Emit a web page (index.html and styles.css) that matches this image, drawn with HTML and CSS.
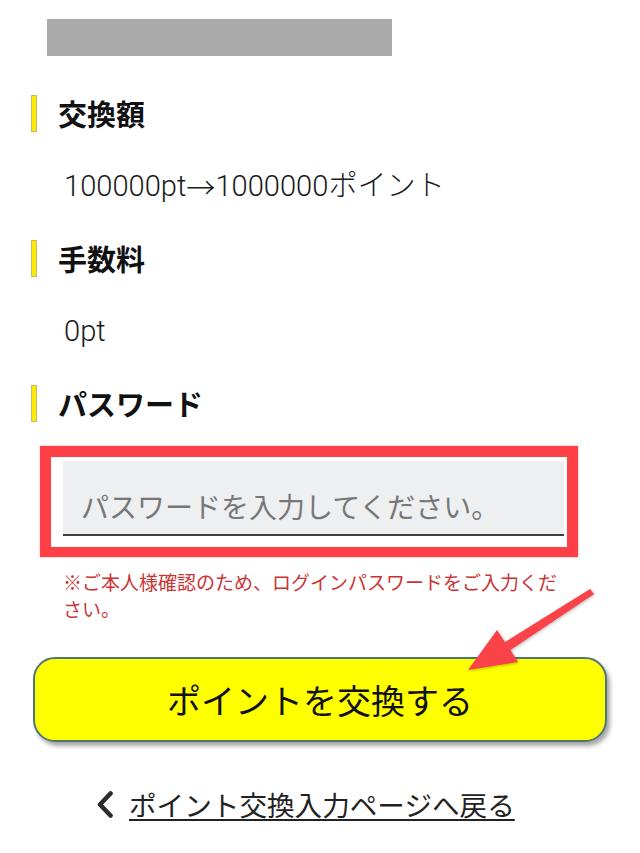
FILE: index.html
```html
<!DOCTYPE html>
<html lang="ja">
<head>
<meta charset="utf-8">
<title>ポイント交換確認</title>
<link rel="stylesheet" href="styles.css">
</head>
<body>
<div class="page">
  <div class="masked"></div>

  <section class="item">
    <h2 class="item-title"><span class="mark"></span>交換額</h2>
    <p class="item-value">100000pt<span class="arrow">→</span>1000000ポイント</p>
  </section>

  <section class="item">
    <h2 class="item-title"><span class="mark"></span>手数料</h2>
    <p class="item-value">0pt</p>
  </section>

  <section class="item">
    <h2 class="item-title"><span class="mark"></span>パスワード</h2>
  </section>

  <div class="password-field">
    <input class="password-input" type="password" placeholder="パスワードを入力してください。">
  </div>
  <p class="note">※ご本人様確認のため、ログインパスワードをご入力ください。</p>

  <button class="submit" type="button">ポイントを交換する</button>

  <a class="back" href="#">
    <svg class="chevron" width="16" height="27" viewBox="0 0 16 27" aria-hidden="true">
      <polyline points="13.5,2.5 3,13.5 13.5,24.5" fill="none" stroke="#2b2b2b" stroke-width="4.6" stroke-linecap="round" stroke-linejoin="round"/>
    </svg>
    <span class="back-text">ポイント交換入力ページへ戻る</span>
  </a>

  <svg class="annotation-arrow" width="640" height="853" viewBox="0 0 640 853" aria-hidden="true">
    <polygon points="594,594 510.5,650 518,662 468,670 497,630 505,642 590,589" fill="#fa4348"/>
  </svg>
</div>
</body>
</html>
```

FILE: styles.css
```css
html, body {
  margin: 0;
  padding: 0;
  background: #ffffff;
}

.page {
  position: relative;
  width: 640px;
  min-height: 853px;
  font-family: Roboto, "Noto Sans CJK JP", sans-serif;
  color: #111111;
  padding-top: 19px;
  box-sizing: border-box;
  overflow: hidden;
}

.masked {
  margin-left: 47px;
  width: 345px;
  height: 37px;
  background: #aaaaaa;
}

.item-title {
  display: flex;
  align-items: center;
  margin: 39px 0 0 31px;
  height: 37px;
  font-family: "Noto Sans CJK JP", sans-serif;
  font-size: 29px;
  font-weight: 700;
  line-height: 37px;
  color: #111111;
}

.item + .item .item-title {
  margin-top: 34px;
}

.mark {
  width: 6px;
  height: 37px;
  margin-right: 21px;
  box-sizing: border-box;
  background: #ffea00;
  border: 1px solid #c4bb6e;
}

.item-value {
  display: flex;
  align-items: center;
  height: 40px;
  margin: 34px 0 0 64px;
  font-size: 29.1px;
  font-weight: 300;
  line-height: 40px;
  color: #1a1a1a;
  white-space: nowrap;
}

.arrow {
  font-family: "Noto Sans CJK JP", sans-serif;
}

.password-field {
  margin: 24px 0 0 40px;
  width: 538px;
  box-sizing: border-box;
  border: 11px solid #fe4046;
  border-bottom-width: 10px;
  padding: 4px 3px 11px 12px;
  background: #ffffff;
  box-shadow: 0 0 2px rgba(255, 64, 70, 0.45);
}

.password-input {
  display: block;
  width: 501px;
  height: 75px;
  box-sizing: border-box;
  margin: 0;
  border: none;
  border-bottom: 2px solid #3c3c3c;
  border-radius: 0;
  background: #eeeff1;
  padding: 17px 0 0 18px;
  font-family: "Noto Sans CJK JP", sans-serif;
  font-size: 28px;
  color: #222222;
  outline: none;
}

.password-input::placeholder {
  color: #777777;
  opacity: 1;
}

.note {
  margin: 11px 0 0 63px;
  width: 502px;
  font-family: "Noto Sans CJK JP", sans-serif;
  font-size: 19px;
  line-height: 27px;
  color: #c93333;
}

.submit {
  display: block;
  margin: 35px 0 0 33px;
  width: 574px;
  height: 85px;
  box-sizing: border-box;
  border: 2px solid #4e7876;
  border-radius: 22px;
  background: #ffff00;
  box-shadow: 3px 4px 4px rgba(0, 0, 0, 0.35);
  font-family: "Noto Sans CJK JP", sans-serif;
  font-size: 34px;
  font-weight: 400;
  color: #111111;
  padding: 0;
  cursor: pointer;
}

.back {
  display: flex;
  align-items: center;
  margin: 44px 0 0 97px;
  width: max-content;
  text-decoration: none;
  color: #222222;
}

.chevron {
  display: block;
  margin-right: 16px;
}

.back-text {
  font-family: "Noto Sans CJK JP", sans-serif;
  font-size: 27.6px;
  line-height: 36px;
  text-decoration: underline;
  text-decoration-thickness: 2px;
  text-underline-offset: 3px;
  color: #222222;
}

.annotation-arrow {
  position: absolute;
  left: 0;
  top: 0;
  pointer-events: none;
  filter: drop-shadow(1px 1px 1.5px rgba(0, 0, 0, 0.25));
}
```
